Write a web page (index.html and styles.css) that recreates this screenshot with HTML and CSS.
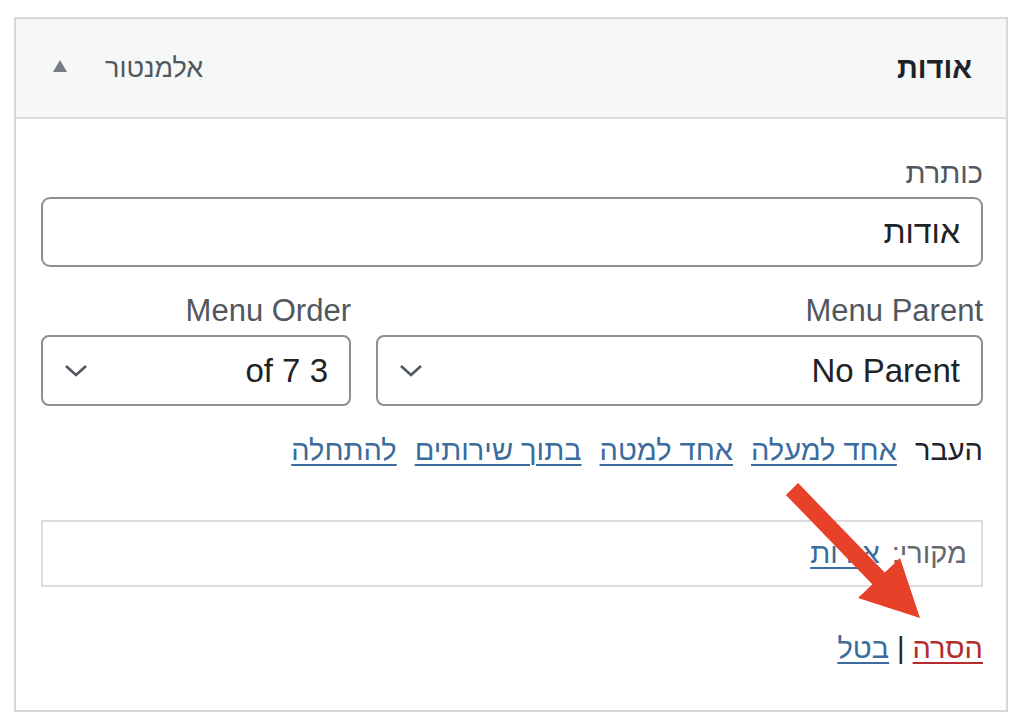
FILE: index.html
```html
<!DOCTYPE html>
<html lang="he" dir="rtl">
<head>
  <meta charset="UTF-8">
  <title>אודות</title>
  <link rel="stylesheet" href="styles.css">
</head>
<body>
<div class="menu-item">
  <div class="item-bar">
    <span class="item-title">אודות</span>
    <span class="item-controls">
      <span class="item-type">אלמנטור</span>
      <svg class="item-toggle" width="14" height="12" viewBox="0 0 14 12"><polygon points="7,0 14,12 0,12" fill="#787c82"/></svg>
    </span>
  </div>

  <div class="item-settings">
    <div class="field">
      <label class="field-label">כותרת</label>
      <input class="text-input" type="text" value="אודות">
    </div>

    <div class="field-row">
      <div class="field">
        <label class="field-label latin">Menu Parent</label>
        <div class="fake-select">
          <span>No Parent</span>
          <svg class="chevron" width="24" height="13" viewBox="0 0 24 13"><polyline points="2,2 12,11 22,2" fill="none" stroke="#50575e" stroke-width="2.6"/></svg>
        </div>
      </div>
      <div class="field">
        <label class="field-label latin">Menu Order</label>
        <div class="fake-select">
          <span dir="ltr">of 7 3</span>
          <svg class="chevron" width="24" height="13" viewBox="0 0 24 13"><polyline points="2,2 12,11 22,2" fill="none" stroke="#50575e" stroke-width="2.6"/></svg>
        </div>
      </div>
    </div>

    <div class="move-row">
      <span class="move-label">העבר</span>
      <a href="#">אחד למעלה</a>
      <a href="#">אחד למטה</a>
      <a href="#">בתוך שירותים</a>
      <a href="#">להתחלה</a>
    </div>

    <div class="original-box">
      <span class="original-label">מקורי:</span>
      <a href="#">אודות</a>
    </div>

    <div class="actions">
      <a href="#" class="delete-link">הסרה</a>
      <span class="sep">|</span>
      <a href="#">בטל</a>
    </div>
  </div>

  <!-- annotation arrow over the panel -->
  <svg class="note-arrow" width="170" height="160" viewBox="0 0 170 160">
    <line x1="22" y1="14" x2="112" y2="107" stroke="#e8412a" stroke-width="17"/>
    <polygon points="150,143 88,123 130,83" fill="#e8412a"/>
  </svg>
</div>
</body>
</html>
```

FILE: styles.css
```css
body {
  margin: 0;
  background: #fff;
  font-family: "Liberation Sans", "DejaVu Sans", Arial, sans-serif;
  color: #1d2327;
}

.menu-item {
  position: relative;
  margin: 17px 16px 0 14px;
  border: 2px solid #d7d8db;
  background: #fff;
}

.item-bar {
  height: 98px;
  display: flex;
  align-items: center;
  justify-content: space-between;
  padding: 0 34px 0 37px;
  background: #f6f7f7;
  border-bottom: 2px solid #dcdcde;
}

.item-title {
  font-size: 29px;
  font-weight: bold;
  color: #1d2327;
}

.item-controls {
  display: flex;
  align-items: center;
  gap: 38px;
}

.item-type {
  font-size: 27px;
  color: #50575e;
}

.item-toggle {
  margin-bottom: 4px;
}

.item-settings {
  padding: 36px 23px 42px 25px;
}

.field-label {
  display: block;
  font-size: 29px;
  line-height: 36px;
  color: #50575e;
  margin-bottom: 6px;
}

.field-label.latin {
  font-size: 31px;
}

.text-input {
  display: block;
  width: 100%;
  height: 70px;
  box-sizing: border-box;
  border: 2px solid #8c8f94;
  border-radius: 9px;
  padding: 0 21px;
  font-family: inherit;
  font-size: 32px;
  color: #1d2327;
  background: #fff;
}

.field-row {
  display: grid;
  grid-template-columns: 1fr 310px;
  gap: 25px;
  margin-top: 26px;
}

.fake-select {
  height: 71px;
  box-sizing: border-box;
  border: 2px solid #8c8f94;
  border-radius: 8px;
  display: flex;
  align-items: center;
  justify-content: space-between;
  padding: 0 21px 0 21px;
  font-size: 33px;
  color: #1d2327;
}

.move-row {
  display: flex;
  align-items: center;
  gap: 18px;
  margin-top: 24px;
  line-height: 40px;
  font-size: 29px;
}

.move-label {
  color: #1d2327;
}

a {
  color: #3a6c9d;
  text-decoration: underline;
  text-decoration-thickness: 2px;
  text-underline-offset: 4px;
}

.original-box {
  margin-top: 50px;
  height: 67px;
  box-sizing: border-box;
  border: 2px solid #dcdcde;
  display: flex;
  align-items: center;
  gap: 12px;
  padding: 0 14px;
  font-size: 29px;
}

.original-label {
  color: #646970;
}

.actions {
  margin-top: 41px;
  line-height: 40px;
  font-size: 29px;
  display: flex;
  align-items: center;
  gap: 8px;
}

.actions .delete-link {
  color: #b32d2e;
}

.sep {
  color: #1d2327;
}

.note-arrow {
  position: absolute;
  left: 754px;
  top: 456px;
}
```
